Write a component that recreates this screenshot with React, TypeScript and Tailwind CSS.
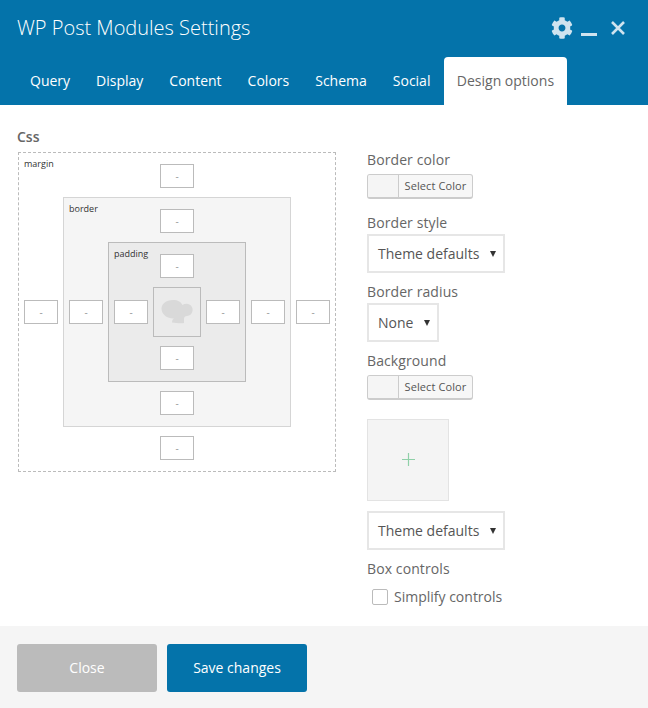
import { FaCog } from "react-icons/fa";

const tabs = ["Query", "Display", "Content", "Colors", "Schema", "Social"];

function Cell() {
  return (
    <div className="w-[34px] h-[24px] bg-white border border-[#bbbbbb] flex items-center justify-center text-[10px] text-[#999999] leading-none">
      -
    </div>
  );
}

function Ring({ label, className, labelClass, children }: { label: string; className: string; labelClass: string; children: React.ReactNode }) {
  return (
    <div className={`relative grid grid-cols-[34px_auto_34px] justify-between items-center justify-items-center content-start gap-y-[9px] ${className}`}>
      <span className={`absolute text-[9px] leading-none text-[#333333] ${labelClass}`}>{label}</span>
      <div className="col-start-2">
        <Cell />
      </div>
      <div className="col-start-1 row-start-2">
        <Cell />
      </div>
      <div className="col-start-2 row-start-2">{children}</div>
      <div className="col-start-3 row-start-2">
        <Cell />
      </div>
      <div className="col-start-2 row-start-3">
        <Cell />
      </div>
    </div>
  );
}

function ColorButton() {
  return (
    <div className="w-[106px] h-[25px] flex rounded-[3px] border border-[#cccccc] border-b-[2px] bg-[#f7f7f7] overflow-hidden">
      <div className="w-[31px] h-full border-r border-[#cccccc] bg-[#f5f5f5]" />
      <div className="flex-1 flex items-center justify-center text-[11px] text-[#555555] tracking-[0.1px]">Select Color</div>
    </div>
  );
}

function Sel({ text, width }: { text: string; width: string }) {
  return (
    <div className={`${width} h-[39px] border-2 border-[#e6e6e6] bg-white flex items-center justify-between pl-[9px] pr-[6px] text-[14px] text-[#555555]`}>
      <span>{text}</span>
      <svg width="6" height="6" viewBox="0 0 6 6" className="mr-[1px]">
        <path d="M0 0H6L3 6Z" fill="#333333" />
      </svg>
    </div>
  );
}

function Label({ children, className = "" }: { children: React.ReactNode; className?: string }) {
  return <div className={`text-[14px] leading-[19px] text-[#666666] tracking-[0.1px] ${className}`}>{children}</div>;
}

export default function App() {
  return (
    <div className="w-[648px] h-[708px] bg-white flex flex-col overflow-hidden" style={{ fontFamily: '"Open Sans", sans-serif' }}>
      <header className="h-[105px] bg-[#0473aa] flex flex-col justify-between shrink-0">
        <div className="flex items-center justify-between pl-[17px] pr-[22px] pt-[14px]">
          <h1 className="text-[20px] leading-[28px] font-light text-white">WP Post Modules Settings</h1>
          <div className="flex items-center text-[#cfe3ef]">
            <FaCog size={22} />
            <div className="w-[16px] h-[2.5px] bg-[#cfe3ef] ml-[8px] mt-[13px]" />
            <svg width="16" height="16" viewBox="0 0 16 16" className="ml-[13px]">
              <path d="M2 2L14 14M14 2L2 14" stroke="#cfe3ef" strokeWidth="2.6" />
            </svg>
          </div>
        </div>
        <nav className="flex items-end pl-[17px]">
          {tabs.map((t) => (
            <div key={t} className="h-[48px] px-[13px] pb-[2px] flex items-center text-[14px] text-white">
              {t}
            </div>
          ))}
          <div className="ml-[1px] h-[48px] w-[123px] pb-[2px] pr-[1px] flex items-center justify-center bg-white rounded-t-[4px] text-[14px] text-[#666666]">Design options</div>
        </nav>
      </header>

      <main className="flex-1 flex flex-col px-[17px] pt-[23px]">
        <div className="text-[14px] leading-[18px] font-semibold text-[#666666]">Css</div>
        <div className="flex mt-[6px]">
          <div className="ml-px">
            <Ring
              label="margin"
              labelClass="left-[5px] top-[6px]"
              className="w-[318px] h-[320px] border border-dashed border-[#bbbbbb] px-[5px] pt-[11px]"
            >
              <Ring
                label="border"
                labelClass="left-[5px] top-[6px]"
                className="w-[228px] h-[230px] border border-[#d5d5d5] bg-[#f5f5f5] px-[5px] pt-[11px]"
              >
                <Ring
                  label="padding"
                  labelClass="left-[5px] top-[6px]"
                  className="w-[138px] h-[140px] border border-[#bbbbbb] bg-[#ebebeb] px-[5px] pt-[11px]"
                >
                  <div className="w-[48px] h-[50px] border border-[#bbbbbb] bg-[#ebebeb] flex items-center justify-center">
                    <svg width="32" height="26" viewBox="0 0 32 26">
                      <path
                        d="M12 1C17 1 20 3 21.500 6C23 5 25 4.500 27 5C30.500 6 32 9 31.500 12C31 15 29 16.800 26 17C24 17.200 23 18 23 20L23 24C20 24.500 15 24 11 23.500C11 21 12 20 13 19.500C7 20 1 16 0.500 10C0.300 5 5 1 12 1Z"
                        fill="#d9d9d9"
                      />
                    </svg>
                  </div>
                </Ring>
              </Ring>
            </Ring>
          </div>

          <div className="ml-[31px] -mt-[2px] flex flex-col items-start">
            <Label>Border color</Label>
            <div className="mt-[5px]"><ColorButton /></div>
            <Label className="mt-[14px]">Border style</Label>
            <div className="mt-[2px]"><Sel text="Theme defaults" width="w-[138px]" /></div>
            <Label className="mt-[9px]">Border radius</Label>
            <div className="mt-[2px]"><Sel text="None" width="w-[72px]" /></div>
            <Label className="mt-[9px]">Background</Label>
            <div className="mt-[5px]"><ColorButton /></div>
            <div className="mt-[19px] w-[82px] h-[82px] border border-[#e3e3e3] bg-[#f4f4f4] flex items-center justify-center">
              <svg width="13" height="13" viewBox="0 0 13 13" className="mb-[1px]">
                <path d="M6.500 0V13M0 6.500H13" stroke="#8fd0a8" strokeWidth="1.200" />
              </svg>
            </div>
            <div className="mt-[10px]"><Sel text="Theme defaults" width="w-[138px]" /></div>
            <Label className="mt-[9px]">Box controls</Label>
            <div className="mt-[9px] ml-[5px] flex items-center">
              <div className="w-[16px] h-[16px] border border-[#bbbbbb] rounded-[2px] bg-white" />
              <span className="ml-[6px] text-[14px] leading-[19px] text-[#666666]">Simplify controls</span>
            </div>
          </div>
        </div>
      </main>

      <footer className="h-[82px] bg-[#f5f5f5] shrink-0 flex items-center gap-[10px] px-[17px] pt-[2px]">
        <button className="w-[140px] h-[48px] rounded-[3px] bg-[#bbbbbb] text-white text-[14px] pb-[2px]">Close</button>
        <button className="w-[140px] h-[48px] rounded-[3px] bg-[#0473aa] text-white text-[14px] pb-[2px]">Save changes</button>
      </footer>
    </div>
  );
}
